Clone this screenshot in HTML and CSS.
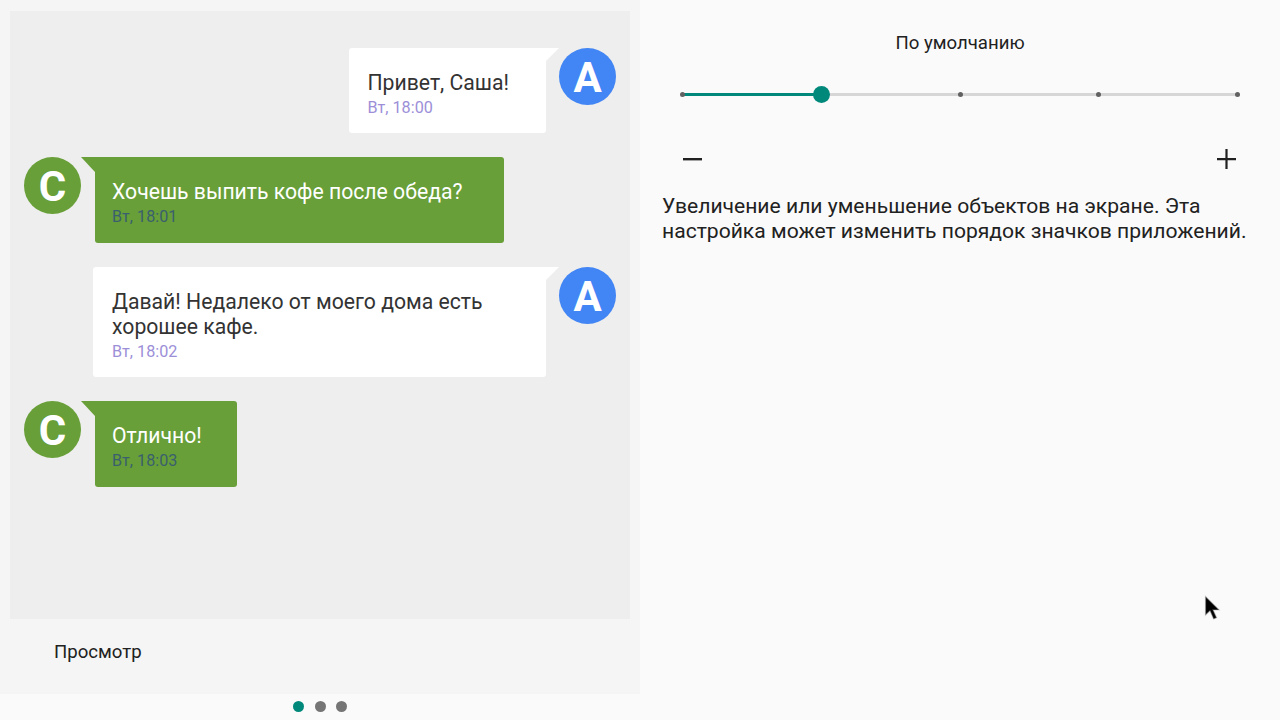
FILE: index.html
```html
<!DOCTYPE html>
<html lang="ru">
<head>
<meta charset="utf-8">
<title>Масштаб</title>
<link rel="stylesheet" href="styles.css">
</head>
<body>
<div class="screen">
  <div class="left">
    <div class="panel">
      <div class="preview">
        <div class="row out">
          <div class="bubble white"><div class="msg">Привет, Саша!</div><div class="time">Вт, 18:00</div></div>
          <div class="avatar blue">A</div>
        </div>
        <div class="row in">
          <div class="avatar green">C</div>
          <div class="bubble greenb long"><div class="msg">Хочешь выпить кофе после обеда?</div><div class="time">Вт, 18:01</div></div>
        </div>
        <div class="row out">
          <div class="bubble white wide"><div class="msg">Давай! Недалеко от моего дома есть хорошее кафе.</div><div class="time">Вт, 18:02</div></div>
          <div class="avatar blue">A</div>
        </div>
        <div class="row in">
          <div class="avatar green">C</div>
          <div class="bubble greenb short"><div class="msg">Отлично!</div><div class="time">Вт, 18:03</div></div>
        </div>
      </div>
      <div class="caption">Просмотр</div>
    </div>
    <div class="dots">
      <span class="dot on"></span><span class="dot"></span><span class="dot"></span>
    </div>
  </div>
  <div class="right">
    <div class="title">По умолчанию</div>
    <div class="slider">
      <div class="fill"></div>
      <span class="tick t0"></span>
      <span class="tick t2"></span>
      <span class="tick t3"></span>
      <span class="tick t4"></span>
      <span class="thumb"></span>
    </div>
    <div class="controls">
      <svg class="ctl" width="22" height="22" viewBox="0 0 22 22"><rect x="1" y="10" width="19" height="2.4" fill="#212121"/></svg>
      <svg class="ctl" width="22" height="22" viewBox="0 0 22 22"><path d="M1 10h19v2.2H1zM9.400 1h2.200v20H9.400z" fill="#212121"/></svg>
    </div>
    <p class="desc">Увеличение или уменьшение объектов на экране. Эта настройка может изменить порядок значков приложений.</p>
  </div>
  <svg class="cursor" width="20" height="28" viewBox="0 0 20 28">
    <path d="M1.500 1.500V20l4.500-4.200 3.600 8.200 3-1.300-3.500-7.800h6z" fill="#000" stroke="#9a9a9a" stroke-opacity=".45" stroke-width="1.200"/>
  </svg>
</div>
</body>
</html>
```
FILE: styles.css
```css
* { box-sizing: border-box; }
html, body { margin: 0; padding: 0; }
body { font-family: Roboto, "Liberation Sans", sans-serif; background: #fafafa; color: #212121; }
.screen { position: relative; width: 1280px; height: 720px; display: flex; overflow: hidden; background: #fafafa; }

.left { width: 640px; display: flex; flex-direction: column; }
.panel { height: 693.500px; background: #f5f5f5; padding: 11px 10px 0; }
.preview { height: 608px; background: #eeeeee; padding: 37px 14px 0 14px; display: flex; flex-direction: column; gap: 24px; }
.row { display: flex; align-items: flex-start; }
.row.out { justify-content: flex-end; }
.avatar { width: 57px; height: 57px; border-radius: 50%; color: #fff; font-size: 42px; font-weight: 700; line-height: 60px; text-align: center; flex: none; }
.avatar.blue { background: #4285f4; }
.avatar.green { background: #689f38; }
.bubble { position: relative; padding: 22px 37px 13.300px 18px; border-radius: 0 0 3px 3px; }
.row.out .bubble { margin-right: 13px; border-top-left-radius: 3px; }
.row.in .bubble { margin-left: 14px; padding-left: 17px; border-top-right-radius: 3px; }
.bubble::before { content: ""; position: absolute; top: 0; width: 0; height: 0; border-style: solid; }
.white { background: #fff; color: #333; }
.white::before { left: 100%; border-width: 13px 13px 0 0; border-color: #fff transparent transparent transparent; }
.greenb { background: #689f38; color: #fff; }
.greenb::before { right: 100%; border-width: 15px 0 0 14px; border-color: #689f38 transparent transparent transparent; }
.row.out .wide { width: 453px; padding-left: 19px; }
.long { width: 409px; }
.short { width: 142px; height: 85.800px; }
.msg { font-size: 21.200px; line-height: 25px; }
.time { font-size: 16.200px; line-height: 25px; }
.white .time { color: #9c8fd8; }
.greenb .time { color: #3a5f6e; }

.caption { padding: 20px 0 0 44px; font-size: 18.600px; line-height: 26px; color: #212121; }
.dots { flex: 1; display: flex; justify-content: center; align-items: center; gap: 10.500px; padding-bottom: 1px; }
.dot { width: 11px; height: 11px; border-radius: 50%; background: #757575; }
.dot.on { background: #00897b; }

.right { width: 640px; padding: 0 22px; background: #fafafa; }
.title { margin-top: 31px; text-align: center; font-size: 18.600px; line-height: 24px; color: #212121; }
.slider { position: relative; height: 3px; margin: 38px 0 0 20px; width: 555px; background: #d6d6d6; }
.fill { position: absolute; left: 0; top: 0; height: 3px; width: 139px; background: #00897b; }
.tick { position: absolute; top: -1px; width: 5px; height: 5px; border-radius: 50%; background: #616161; margin-left: -2.500px; }
.t0 { left: 0; }
.t2 { left: 278px; }
.t3 { left: 416px; }
.t4 { left: 555px; }
.thumb { position: absolute; left: 131px; top: -7px; width: 17px; height: 17px; border-radius: 50%; background: #00897b; }
.controls { display: flex; justify-content: space-between; margin: 52px 0 0 20px; width: 556px; height: 22px; }
.desc { margin: 23px 0 0; font-size: 21.100px; line-height: 25px; color: #212121; }
.cursor { position: absolute; left: 1204px; top: 595px; }
```
